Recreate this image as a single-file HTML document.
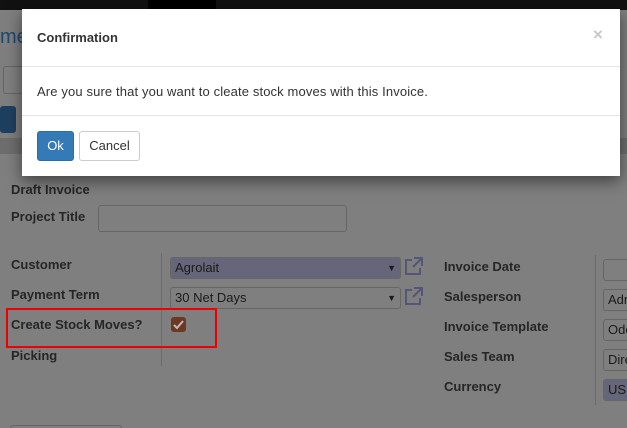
<!DOCTYPE html>
<html style="overflow:hidden;height:428px"><head><style>
body{margin:0;width:627px;height:428px;overflow:hidden;background:#7f7f7f;font-family:"Liberation Sans",sans-serif;position:relative}
.a{position:absolute}
.lbl{position:absolute;font-size:13px;font-weight:bold;color:#262626}
.inp{position:absolute;border:1px solid #666;border-radius:3px;background:#7f7f7f;font-size:13px;color:#1a1a1a;box-sizing:border-box;padding:3px 4px;overflow:hidden;white-space:nowrap}
</style></head><body>
<div class="a" style="left:0;top:0;width:627px;height:10px;background:#111"></div>
<div class="a" style="left:148px;top:0;width:68px;height:10px;background:#000"></div>
<div class="a" style="left:0;top:26px;font-size:20px;color:#1d4a70">me</div>
<div class="a" style="left:3px;top:66px;width:20px;height:26px;border:1px solid #666;border-radius:3px"></div>
<div class="a" style="left:0;top:106px;width:16px;height:27px;background:#1e4060;border-radius:3px"></div>
<div class="a" style="left:0;top:138px;width:627px;height:16px;background:#6e6e6e"></div>
<div class="lbl" style="left:11px;top:182px">Draft Invoice</div>
<div class="lbl" style="left:11px;top:209px">Project Title</div>
<div class="inp" style="left:98px;top:205px;width:249px;height:27px"></div>
<div class="a" style="left:161px;top:253px;width:1px;height:113px;background:#6a6a6a"></div>
<div class="a" style="left:595px;top:255px;width:1px;height:150px;background:#6a6a6a"></div>
<div class="lbl" style="left:11px;top:257px">Customer</div>
<div class="lbl" style="left:11px;top:287px">Payment Term</div>
<div class="lbl" style="left:11px;top:317px">Create Stock Moves?</div>
<div class="lbl" style="left:11px;top:348px">Picking</div>
<div class="inp" style="left:170px;top:257px;width:231px;height:22px;background:#66667a;padding:2px 4px">Agrolait<span style="position:absolute;right:4px;font-size:9px;top:5px">▼</span></div>
<div class="inp" style="left:170px;top:287px;width:231px;height:22px;padding:2px 4px">30 Net Days<span style="position:absolute;right:4px;font-size:9px;top:5px">▼</span></div>
<svg class="a" style="left:402px;top:256px" width="22" height="22" viewBox="0 0 22 22" fill="none" stroke="#55557a" stroke-width="2"><path d="M10 4H4v14h14v-6M12 2h8v8M20 2l-9 9"/></svg>
<svg class="a" style="left:402px;top:286px" width="22" height="22" viewBox="0 0 22 22" fill="none" stroke="#55557a" stroke-width="2"><path d="M10 4H4v14h14v-6M12 2h8v8M20 2l-9 9"/></svg>
<div class="a" style="left:171px;top:317px;width:15px;height:15px;background:#6e3820;border-radius:3px"></div>
<svg class="a" style="left:171px;top:317px" width="15" height="15"><path d="M3 8l3 3 6-7" stroke="#bbb" stroke-width="2" fill="none"/></svg>
<div class="a" style="left:6px;top:308px;width:207px;height:36px;border:2px solid #e00"></div>
<div class="lbl" style="left:444px;top:259px">Invoice Date</div>
<div class="lbl" style="left:444px;top:289px">Salesperson</div>
<div class="lbl" style="left:444px;top:319px">Invoice Template</div>
<div class="lbl" style="left:444px;top:349px">Sales Team</div>
<div class="lbl" style="left:444px;top:379px">Currency</div>
<div class="inp" style="left:603px;top:259px;width:30px;height:22px"></div>
<div class="inp" style="left:603px;top:289px;width:30px;height:22px;padding:2px 4px">Adm</div>
<div class="inp" style="left:603px;top:319px;width:30px;height:22px;padding:2px 4px">Odo</div>
<div class="inp" style="left:603px;top:349px;width:30px;height:22px;padding:2px 4px">Direc</div>
<div class="inp" style="left:603px;top:379px;width:30px;height:22px;background:#66667a;padding:2px 4px">USD</div>
<div class="a" style="left:10px;top:425px;width:110px;height:3px;border:1px solid #666;border-bottom:0;border-radius:3px 3px 0 0"></div>
<div class="a" style="left:22px;top:9px;width:598px;height:167px;background:#fff;box-shadow:0 5px 15px rgba(0,0,0,.5)">
 <div class="a" style="left:15px;top:21px;font-size:13px;font-weight:bold;color:#333">Confirmation</div>
 <div class="a" style="left:571px;top:16px;font-size:17px;font-weight:bold;color:#c8c8c8">×</div>
 <div class="a" style="left:0;top:57px;width:598px;height:1px;background:#e5e5e5"></div>
 <div class="a" style="left:15px;top:75px;font-size:13px;color:#333;letter-spacing:0.13px">Are you sure that you want to cleate stock moves with this Invoice.</div>
 <div class="a" style="left:0;top:106px;width:598px;height:1px;background:#e5e5e5"></div>
 <div class="a" style="left:15px;top:122px;width:37px;height:30px;background:#337ab7;border:1px solid #2e6da4;border-radius:3px;box-sizing:border-box;color:#fff;font-size:13px;text-align:center;line-height:28px">Ok</div>
 <div class="a" style="left:57px;top:122px;width:61px;height:30px;background:#fff;border:1px solid #ccc;border-radius:3px;box-sizing:border-box;color:#333;font-size:13px;text-align:center;line-height:28px">Cancel</div>
</div>
</body></html>
